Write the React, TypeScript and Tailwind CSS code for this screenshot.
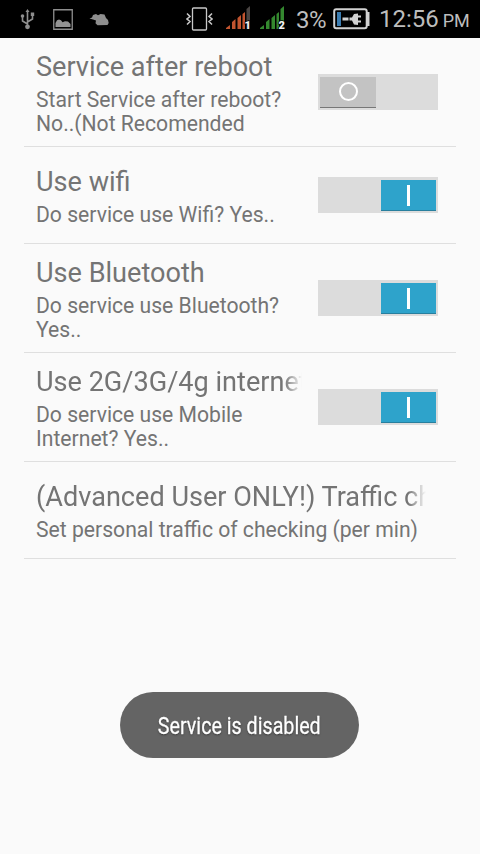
import { useState } from "react";
import clsx from "clsx";

interface Preference {
  id: string;
  title: string;
  summary: string;
  enabled?: boolean;
}

const PREFERENCES: Preference[] = [
  {
    id: "reboot",
    title: "Service after reboot",
    summary: "Start Service after reboot? No..(Not Recomended",
    enabled: false,
  },
  { id: "wifi", title: "Use wifi", summary: "Do service use Wifi? Yes..", enabled: true },
  { id: "bluetooth", title: "Use Bluetooth", summary: "Do service use Bluetooth? Yes..", enabled: true },
  { id: "mobile", title: "Use 2G/3G/4g internet", summary: "Do service use Mobile Internet? Yes..", enabled: true },
  {
    id: "traffic",
    title: "(Advanced User ONLY!) Traffic check",
    summary: "Set personal traffic of checking (per min)",
  },
];

function UsbIcon() {
  return (
    <svg className="ml-[19px] shrink-0" width="17" height="22" viewBox="0 0 17 22" fill="none" stroke="#8e8e8e" strokeWidth="1.6">
      <path d="M8.500 3v15M8.500 16 3.500 13V8.500M8.500 14l5-3V6" />
      <path d="M8.500 1 10.500 4h-4z" fill="#8e8e8e" stroke="none" />
      <circle cx="8.500" cy="18.800" r="2.400" fill="#8e8e8e" stroke="none" />
      <circle cx="3.500" cy="8" r="1.800" fill="#8e8e8e" stroke="none" />
      <path d="M11.800 4.500h3.400v3.400h-3.400z" fill="#8e8e8e" stroke="none" />
    </svg>
  );
}

function PictureIcon() {
  return (
    <svg className="ml-[17px] shrink-0" width="20" height="21" viewBox="0 0 20 21">
      <path d="M.75.75h18.500v19.500H.75z" fill="none" stroke="#8e8e8e" strokeWidth="1.300" />
      <path d="M2.500 18v-4l1.500-2.700 2-.8 2 .8 1.500 2 2.500-1 3 .3 2.500 2.400v3z" fill="#939393" />
    </svg>
  );
}

function CloudIcon() {
  return (
    <svg className="ml-4 shrink-0" width="21" height="13" viewBox="0 0 21 13" fill="#8e8e8e">
      <path d="M.5 5.500 3 4.500 4 2l3-1 2 1.200L11.500 1l4 .5 1.500 3.500 2 2 .7 3-1.200 2-10 .200-2-2 .5-2.700-3-1z" />
    </svg>
  );
}

function VibrateIcon() {
  return (
    <svg className="shrink-0" width="27" height="24" viewBox="0 0 27 24" fill="none" stroke="#c8c8c8">
      <rect x="6.500" y="1" width="14" height="22" rx="1" strokeWidth="1.300" />
      <path d="m1 6.500 3 3-3 2.500 3 2.500-3 3M26 6.500l-3 3 3 2.500-3 2.500 3 3" strokeWidth="1.500" />
    </svg>
  );
}

function SignalIcon({ sim, color, full }: { sim: number; color: string; full: boolean }) {
  return (
    <svg className="shrink-0 overflow-visible" width="27" height="25" viewBox="0 0 27 25" fill={color}>
      <path d="M1 24v-1l4-3v4zM7 24v-7l3.500-3v10zM12.500 24V13l3.500-3v14z" />
      <path d="M17.500 24V9L20 7v17z" />
      <path d="M21.500 24V4L25 1v23z" fill={full ? color : "#4a4543"} />
      <text
        x="19.500"
        y="24"
        fontSize="11"
        fontWeight="900"
        fontFamily="Roboto, sans-serif"
        fill="#f2f2f2"
        stroke="#000"
        strokeWidth="1.500"
        paintOrder="stroke"
      >
        {sim}
      </text>
    </svg>
  );
}

function BatteryIcon() {
  return (
    <svg className="shrink-0" width="38" height="22" viewBox="0 0 38 22">
      <rect x="1.200" y="1.200" width="32.500" height="19" rx="2" fill="none" stroke="#d2d2d2" strokeWidth="2" />
      <path d="M34 4h2.500v14H34z" fill="#d2d2d2" />
      <path d="M4 4h4v14H4z" fill="#3c7db1" />
      <path d="M9.500 9.500h6v3h-6zM16.500 9.500H19l2-3.500 4-.500v2h3v2h-3v3h3v2h-3v2.500l-4-.500-2-4h-2.500z" fill="#d2d2d2" />
    </svg>
  );
}

function StatusBar() {
  return (
    <header className="flex h-[38px] shrink-0 items-center bg-black text-[#bdbdbd]">
      <UsbIcon />
      <PictureIcon />
      <CloudIcon />
      <div className="ml-[76px] flex items-center">
        <VibrateIcon />
        <div className="ml-3 flex items-center gap-[7px] pb-1">
          <SignalIcon sim={1} color="#c1542f" full={false} />
          <SignalIcon sim={2} color="#34882f" full />
        </div>
      </div>
      <span className="ml-[10px] w-[37px] pt-0.5 text-[24px] leading-9 tracking-[-0.5px] whitespace-nowrap">3%</span>
      <BatteryIcon />
      <span className="ml-2 pt-0.5 text-[24px] leading-9 whitespace-nowrap">
        12:56 <span className="-ml-0.5 text-[18px]">PM</span>
      </span>
    </header>
  );
}

function Switch({ checked, onToggle }: { checked: boolean; onToggle: () => void }) {
  return (
    <button
      role="switch"
      aria-checked={checked}
      onClick={onToggle}
      className={clsx("flex h-9 w-[120px] shrink-0 bg-[#dcdcdc] px-0.5 pt-[3px] pb-0.5", checked && "justify-end")}
    >
      <span
        className={clsx(
          "flex h-[31px] items-center justify-center border-b",
          checked ? "w-[55px] border-[#287f9e] bg-[#2ea3cb]" : "w-14 border-[#777] bg-[#c3c3c3]",
        )}
      >
        {checked ? (
          <span className="h-[21px] w-[3px] bg-white" />
        ) : (
          <span className="mb-0.5 size-[19px] rounded-full border-[2.5px] border-white" />
        )}
      </span>
    </button>
  );
}

function PreferenceRow({ item }: { item: Preference }) {
  const [checked, setChecked] = useState(item.enabled ?? false);
  const hasSwitch = item.enabled !== undefined;

  return (
    <li
      className={clsx(
        "flex items-center border-b border-[#dfdfdf] pl-3 text-[#747474]",
        hasSwitch ? "pr-[18px]" : "pr-[30px]",
        item.id === "wifi" || item.id === "traffic" ? "h-[97px]" : "h-[109px]",
      )}
    >
      <div className="min-w-0 flex-1 pt-[3px]">
        <div
          className={clsx(
            "overflow-hidden text-[27.1px] leading-8 whitespace-nowrap",
            (item.id === "mobile" || item.id === "traffic") &&
              "[mask-image:linear-gradient(to_right,#000_calc(100%_-_18px),transparent)]",
          )}
        >
          {item.title}
        </div>
        <div className="mt-[5px] text-[21.15px] leading-6">{item.summary}</div>
      </div>
      {hasSwitch && (
        <div className="ml-4">
          <Switch checked={checked} onToggle={() => setChecked((c) => !c)} />
        </div>
      )}
    </li>
  );
}

export default function App() {
  return (
    <div className="flex h-[854px] w-[480px] flex-col overflow-hidden bg-[#fafafa] font-[Roboto,sans-serif]">
      <StatusBar />
      <ul className="mx-6">
        {PREFERENCES.map((item) => (
          <PreferenceRow key={item.id} item={item} />
        ))}
      </ul>
      <div className="mt-auto mb-24 ml-[120px] flex h-[66px] w-[239px] items-center justify-center rounded-full bg-[#646464]">
        <span className="scale-x-[0.82] pt-0.5 text-[24px] whitespace-nowrap text-white [-webkit-text-stroke:0.3px_#fff] [text-shadow:0_1px_2px_#333]">
          Service is disabled
        </span>
      </div>
    </div>
  );
}
